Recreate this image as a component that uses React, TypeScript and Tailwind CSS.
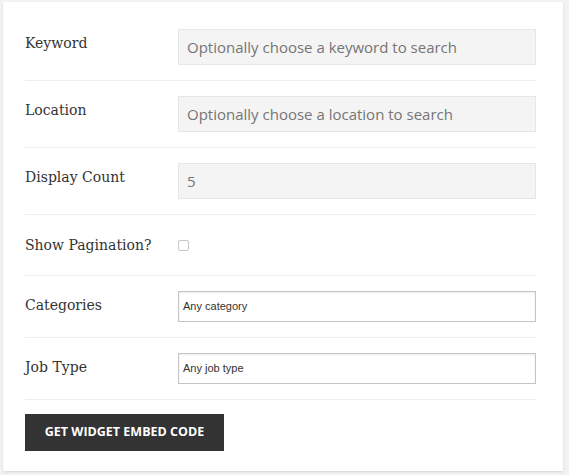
import React from 'react';

const labelCls = "w-[153px] shrink-0 pt-1 text-[14px] leading-5 text-[#333] font-['DejaVu_Serif',serif]";

const TextRow: React.FC<{ label: string; placeholder: string }> = ({ label, placeholder }) => (
  <div className="flex items-start border-b border-[#eeeeee] pt-[15px] pb-[15px]">
    <div className={labelCls}>{label}</div>
    <div className="flex h-9 flex-1 items-center border border-[#e6e6e6] bg-[#f4f4f4] pl-[8px] font-['Open_Sans',sans-serif] text-[15px] text-[#757575]">
      {placeholder}
    </div>
  </div>
);

const SelectRow: React.FC<{ label: string; value: string }> = ({ label, value }) => (
  <div className="flex items-start border-b border-[#eeeeee] pt-[15px] pb-[15px]">
    <div className={labelCls}>{label}</div>
    <div className="flex h-[31px] flex-1 items-center border border-[#c4c4c4] bg-white pl-[4px] shadow-[inset_0_1px_2px_rgba(0,0,0,0.08)] font-['Liberation_Sans',sans-serif] text-[11px] text-[#333]">
      {value}
    </div>
  </div>
);

const App: React.FC = () => {
  return (
    <div className="h-[475px] w-[569px] overflow-hidden bg-[#f2f2f2] pt-[2px] pl-[3px]">
      <div className="w-[560px] h-[469px] bg-white pl-[22px] pr-[27px] pt-[12px] shadow-[0_1px_2px_rgba(0,0,0,0.12)]">
        <TextRow label="Keyword" placeholder="Optionally choose a keyword to search" />
        <TextRow label="Location" placeholder="Optionally choose a location to search" />
        <TextRow label="Display Count" placeholder="5" />
        <div className="flex h-[61px] items-center border-b border-[#eeeeee]">
          <div className="w-[153px] shrink-0 text-[14px] leading-5 text-[#333] font-['DejaVu_Serif',serif]">Show Pagination?</div>
          <div className="h-[11px] w-[11px] rounded-[2px] border border-[#c8c8c8] bg-white" />
        </div>
        <SelectRow label="Categories" value="Any category" />
        <SelectRow label="Job Type" value="Any job type" />
        <button className="mt-[14px] h-[37px] w-[199px] bg-[#333333] font-['Open_Sans',sans-serif] text-[12.5px] font-bold uppercase text-white">
          Get Widget Embed Code
        </button>
      </div>
    </div>
  );
};

export default App;
